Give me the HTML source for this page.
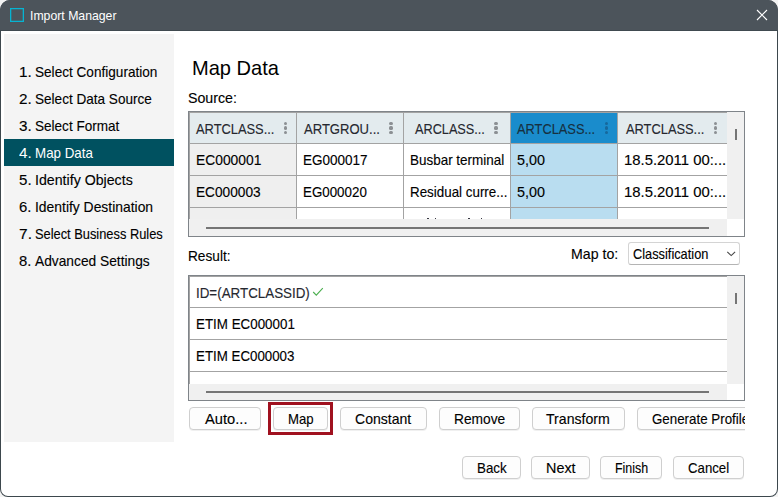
<!DOCTYPE html>
<html>
<head>
<meta charset="utf-8">
<title>Import Manager</title>
<style>
*{box-sizing:border-box;margin:0;padding:0}
html,body{width:778px;height:497px;overflow:hidden;background:#f3f3f3}
body{font-family:"Liberation Sans",sans-serif;font-size:14px;color:#111;position:relative}
.win{position:absolute;left:0;top:0;width:778px;height:497px;border-radius:10px 10px 8px 8px;background:#fff;overflow:hidden;box-shadow:inset 0 0 0 1px #3d474d}
.a{position:absolute}
.tb{position:absolute;left:0;top:0;width:778px;height:31px;background:#4c545b;border-bottom:1px solid #404a50}
.ico{position:absolute;left:10px;top:8px;width:14px;height:14px;border:1px solid #06b4d2;box-shadow:inset 0 0 0 0.3px #06b4d2}
.side{position:absolute;left:4px;top:34px;width:170px;height:408px;background:#f4f4f4}
.sel{position:absolute;left:4px;top:139px;width:170px;height:27px;background:#005160}
.t{position:absolute;white-space:nowrap;height:20px;line-height:20px;transform-origin:0 50%;-webkit-text-stroke:0.12px}
.grid{position:absolute;background:#fff;border:1px solid #7f8489;overflow:hidden}
.btn{position:absolute;height:23px;border:1px solid #cfcfcf;border-radius:4px;background:#fdfdfd;text-align:center;line-height:21px;font-size:14.5px;white-space:nowrap;color:#111;box-shadow:0 1px 0 rgba(0,0,0,0.06)}
</style>
</head>
<body>
<div class="win">
<div class="tb"><div class="ico"></div>
<svg class="a" style="left:756px;top:9px" width="12" height="12" viewBox="0 0 12 12"><path d="M1 1 L11 11 M11 1 L1 11" stroke="#fff" stroke-width="1.1" fill="none"/></svg></div>
<div class="t" style="left:29.8px;top:6.00px;font-size:12.4px;transform:scaleX(0.9892);color:#ffffff;-webkit-text-stroke:0">Import Manager</div>
<div class="side"></div><div class="sel"></div>
<div class="t" style="left:18.8px;top:62.00px;font-size:14.2px;transform:scaleX(1.0812);color:#000000">1.</div>
<div class="t" style="left:18.8px;top:89.00px;font-size:14.2px;transform:scaleX(1.0795);color:#000000">2.</div>
<div class="t" style="left:18.9px;top:116.00px;font-size:14.2px;transform:scaleX(1.0754);color:#000000">3.</div>
<div class="t" style="left:18.9px;top:143.00px;font-size:14.2px;transform:scaleX(1.0754);color:#ffffff;-webkit-text-stroke:0">4.</div>
<div class="t" style="left:19.0px;top:170.00px;font-size:14.2px;transform:scaleX(1.0640);color:#000000">5.</div>
<div class="t" style="left:19.1px;top:197.00px;font-size:14.2px;transform:scaleX(1.0511);color:#000000">6.</div>
<div class="t" style="left:18.7px;top:224.00px;font-size:14.2px;transform:scaleX(1.0952);color:#000000">7.</div>
<div class="t" style="left:19.2px;top:251.00px;font-size:14.2px;transform:scaleX(1.0442);color:#000000">8.</div>
<div class="t" style="left:34.7px;top:62.00px;font-size:14.2px;transform:scaleX(0.9578);color:#000000">Select Configuration</div>
<div class="t" style="left:34.7px;top:89.00px;font-size:14.2px;transform:scaleX(0.9559);color:#000000">Select Data Source</div>
<div class="t" style="left:34.7px;top:116.00px;font-size:14.2px;transform:scaleX(0.9547);color:#000000">Select Format</div>
<div class="t" style="left:35.4px;top:143.00px;font-size:14.2px;transform:scaleX(0.9415);color:#ffffff;-webkit-text-stroke:0">Map Data</div>
<div class="t" style="left:34.7px;top:170.00px;font-size:14.2px;transform:scaleX(0.9995);color:#000000">Identify Objects</div>
<div class="t" style="left:34.7px;top:197.00px;font-size:14.2px;transform:scaleX(0.9785);color:#000000">Identify Destination</div>
<div class="t" style="left:34.7px;top:224.00px;font-size:14.2px;transform:scaleX(0.9049);color:#000000">Select Business Rules</div>
<div class="t" style="left:34.6px;top:251.00px;font-size:14.2px;transform:scaleX(0.9696);color:#000000">Advanced Settings</div>
<div class="t" style="left:192.0px;top:58.00px;font-size:20.2px;transform:scaleX(0.9936);color:#000000;-webkit-text-stroke:0">Map Data</div>
<div class="t" style="left:187.5px;top:88.00px;font-size:14.2px;transform:scaleX(1.0009);color:#000000">Source:</div>
<div class="t" style="left:188.1px;top:246.00px;font-size:14.2px;transform:scaleX(0.9628);color:#000000">Result:</div>
<div class="t" style="left:570.9px;top:244.00px;font-size:14.2px;transform:scaleX(0.9982);color:#000000">Map to:</div>
<div class="grid" style="left:188px;top:111px;width:557px;height:126px">
<div class="a" style="left:0px;top:0px;width:538px;height:31px;background:#e3ebee;"></div>
<div class="a" style="left:0px;top:31px;width:107px;height:76px;background:#efefef;"></div>
<div class="a" style="left:321px;top:0px;width:107px;height:31px;background:#1a8ccc;"></div>
<div class="a" style="left:321px;top:31px;width:107px;height:76px;background:#b9ddf0;"></div>
<div class="a" style="left:0px;top:0px;width:538px;height:1px;background:#a3a3a3;"></div>
<div class="a" style="left:0px;top:31px;width:538px;height:1px;background:#a3a3a3;"></div>
<div class="a" style="left:0px;top:63px;width:538px;height:1px;background:#a3a3a3;"></div>
<div class="a" style="left:0px;top:95px;width:538px;height:1px;background:#a3a3a3;"></div>
<div class="a" style="left:0px;top:0px;width:1px;height:107px;background:#a3a3a3;"></div>
<div class="a" style="left:107px;top:0px;width:1px;height:107px;background:#a3a3a3;"></div>
<div class="a" style="left:214px;top:0px;width:1px;height:107px;background:#a3a3a3;"></div>
<div class="a" style="left:321px;top:0px;width:1px;height:107px;background:#a3a3a3;"></div>
<div class="a" style="left:428px;top:0px;width:1px;height:107px;background:#a3a3a3;"></div>
<div class="a" style="left:538px;top:0px;width:17px;height:107px;background:#f0f0f0;"></div>
<div class="a" style="left:546px;top:17px;width:2px;height:11px;background:#757575;"></div>
<div class="a" style="left:0px;top:107px;width:538px;height:17px;background:#f0f0f0;"></div>
<div class="a" style="left:17px;top:115px;width:503px;height:2px;background:#757575;"></div>
<div class="a" style="left:95.3px;top:9.6px;width:3.2px;height:3.2px;border-radius:50%;background:#8b8f93"></div>
<div class="a" style="left:95.3px;top:14.4px;width:3.2px;height:3.2px;border-radius:50%;background:#8b8f93"></div>
<div class="a" style="left:95.3px;top:19.2px;width:3.2px;height:3.2px;border-radius:50%;background:#8b8f93"></div>
<div class="a" style="left:200.4px;top:9.6px;width:3.2px;height:3.2px;border-radius:50%;background:#8b8f93"></div>
<div class="a" style="left:200.4px;top:14.4px;width:3.2px;height:3.2px;border-radius:50%;background:#8b8f93"></div>
<div class="a" style="left:200.4px;top:19.2px;width:3.2px;height:3.2px;border-radius:50%;background:#8b8f93"></div>
<div class="a" style="left:305.4px;top:9.6px;width:3.2px;height:3.2px;border-radius:50%;background:#8b8f93"></div>
<div class="a" style="left:305.4px;top:14.4px;width:3.2px;height:3.2px;border-radius:50%;background:#8b8f93"></div>
<div class="a" style="left:305.4px;top:19.2px;width:3.2px;height:3.2px;border-radius:50%;background:#8b8f93"></div>
<div class="a" style="left:416.2px;top:9.6px;width:3.2px;height:3.2px;border-radius:50%;background:#17689c"></div>
<div class="a" style="left:416.2px;top:14.4px;width:3.2px;height:3.2px;border-radius:50%;background:#17689c"></div>
<div class="a" style="left:416.2px;top:19.2px;width:3.2px;height:3.2px;border-radius:50%;background:#17689c"></div>
<div class="a" style="left:524.7px;top:9.6px;width:3.2px;height:3.2px;border-radius:50%;background:#8b8f93"></div>
<div class="a" style="left:524.7px;top:14.4px;width:3.2px;height:3.2px;border-radius:50%;background:#8b8f93"></div>
<div class="a" style="left:524.7px;top:19.2px;width:3.2px;height:3.2px;border-radius:50%;background:#8b8f93"></div>
<div class="a" style="left:238.4px;top:106px;width:1.6px;height:1px;background:#3a3a44"></div>
<div class="a" style="left:245.8px;top:106px;width:1.6px;height:1px;background:#3a3a44"></div>
<div class="a" style="left:279.0px;top:106px;width:1.6px;height:1px;background:#3a3a44"></div>
<div class="a" style="left:291.8px;top:106px;width:1.6px;height:1px;background:#3a3a44"></div>
</div>
<div class="t" style="left:196.1px;top:120.00px;font-size:13.8px;transform:scaleX(0.9327);color:#25272f">ARTCLASS...</div>
<div class="t" style="left:303.8px;top:120.00px;font-size:13.8px;transform:scaleX(0.9459);color:#25272f">ARTGROU...</div>
<div class="t" style="left:414.8px;top:120.00px;font-size:13.8px;transform:scaleX(0.9206);color:#25272f">ARCLASS...</div>
<div class="t" style="left:517.4px;top:120.00px;font-size:13.8px;transform:scaleX(0.9290);color:#17303f">ARTCLASS...</div>
<div class="t" style="left:625.5px;top:120.00px;font-size:13.8px;transform:scaleX(0.9315);color:#25272f">ARTCLASS...</div>
<div class="t" style="left:195.7px;top:150.00px;font-size:14.2px;transform:scaleX(0.9744);color:#000000">EC000001</div>
<div class="t" style="left:302.8px;top:150.00px;font-size:14.2px;transform:scaleX(0.9517);color:#000000">EG000017</div>
<div class="t" style="left:410.1px;top:150.00px;font-size:14.2px;transform:scaleX(0.9480);color:#000000">Busbar terminal</div>
<div class="t" style="left:517.0px;top:150.00px;font-size:14.2px;transform:scaleX(1.0114);color:#000000">5,00</div>
<div class="t" style="left:623.6px;top:150.00px;font-size:14.2px;transform:scaleX(1.0473);color:#000000">18.5.2011 00:...</div>
<div class="t" style="left:195.7px;top:182.00px;font-size:14.2px;transform:scaleX(0.9636);color:#000000">EC000003</div>
<div class="t" style="left:302.9px;top:182.00px;font-size:14.2px;transform:scaleX(0.9405);color:#000000">EG000020</div>
<div class="t" style="left:410.2px;top:182.00px;font-size:14.2px;transform:scaleX(0.9428);color:#000000">Residual curre...</div>
<div class="t" style="left:517.0px;top:182.00px;font-size:14.2px;transform:scaleX(1.0114);color:#000000">5,00</div>
<div class="t" style="left:623.6px;top:182.00px;font-size:14.2px;transform:scaleX(1.0473);color:#000000">18.5.2011 00:...</div>
<div class="a" style="left:628px;top:242px;width:112px;height:23px;border:1px solid #d4d4d4;border-bottom-color:#b4b4b4;border-radius:3px;background:#fff"></div>
<svg class="a" style="left:726px;top:250px" width="11" height="8" viewBox="0 0 11 8"><path d="M1.3 1.8 L5.2 5.6 L9.1 1.8" stroke="#484848" stroke-width="1.1" fill="none"/></svg>
<div class="t" style="left:632.8px;top:244.00px;font-size:14.2px;transform:scaleX(0.9016);color:#000000">Classification</div>
<div class="grid" style="left:188px;top:275px;width:557px;height:126px">
<div class="a" style="left:0px;top:0px;width:538px;height:1px;background:#a3a3a3"></div>
<div class="a" style="left:0px;top:0px;width:1px;height:108px;background:#a3a3a3"></div>
<div class="a" style="left:0px;top:31px;width:538px;height:1px;background:#a3a3a3"></div>
<div class="a" style="left:0px;top:63px;width:538px;height:1px;background:#a3a3a3"></div>
<div class="a" style="left:0px;top:95px;width:538px;height:1px;background:#a3a3a3"></div>
<div class="a" style="left:538px;top:0px;width:17px;height:108px;background:#f0f0f0"></div>
<div class="a" style="left:546px;top:17px;width:2px;height:11px;background:#757575"></div>
<div class="a" style="left:0px;top:108px;width:538px;height:16px;background:#f0f0f0"></div>
<div class="a" style="left:17px;top:115px;width:503px;height:2px;background:#757575"></div>
</div>
<div class="t" style="left:195.5px;top:284.00px;font-size:13.8px;transform:scaleX(0.9692);color:#25272f">ID=(ARTCLASSID)</div>
<div class="t" style="left:196.0px;top:314.00px;font-size:14.2px;transform:scaleX(0.9423);color:#000000">ETIM EC000001</div>
<div class="t" style="left:196.0px;top:346.00px;font-size:14.2px;transform:scaleX(0.9384);color:#000000">ETIM EC000003</div>
<svg class="a" style="left:312px;top:287px" width="13" height="10" viewBox="0 0 13 10"><path d="M1.2 5 L4.3 8.1 L10.8 1.2" stroke="#4caf50" stroke-width="1.1" fill="none"/></svg>
<div class="a" style="left:188px;top:400px;width:557px;height:40px;overflow:hidden">
<div class="btn" style="left:1px;top:7px;width:72px"></div><div class="t" style="left:16.7px;top:9.00px;font-size:14.2px;transform:scaleX(1.0353);color:#000000">Auto...</div>
<div class="a" style="left:80px;top:2px;width:65px;height:33px;border:3px solid #a0111f"></div>
<div class="btn" style="left:85px;top:7px;width:55px"></div><div class="t" style="left:99.8px;top:9.00px;font-size:14.2px;transform:scaleX(0.9278);color:#000000">Map</div>
<div class="btn" style="left:152px;top:7px;width:87px"></div><div class="t" style="left:167.0px;top:9.00px;font-size:14.2px;transform:scaleX(0.9899);color:#000000">Constant</div>
<div class="btn" style="left:251px;top:7px;width:81px"></div><div class="t" style="left:266.2px;top:9.00px;font-size:14.2px;transform:scaleX(0.9699);color:#000000">Remove</div>
<div class="btn" style="left:344px;top:7px;width:93px"></div><div class="t" style="left:358.1px;top:9.00px;font-size:14.2px;transform:scaleX(0.9955);color:#000000">Transform</div>
<div class="btn" style="left:449px;top:7px;width:130px"></div><div class="t" style="left:463.9px;top:9.00px;font-size:14.2px;transform:scaleX(0.9398);color:#000000">Generate Profile</div>
</div>
<div class="btn" style="left:462px;top:456px;width:59px"></div><div class="t" style="left:476.6px;top:458.00px;font-size:14.2px;transform:scaleX(0.9406);color:#000000">Back</div>
<div class="btn" style="left:531px;top:456px;width:59px"></div><div class="t" style="left:545.9px;top:458.00px;font-size:14.2px;transform:scaleX(1.0137);color:#000000">Next</div>
<div class="btn" style="left:600px;top:456px;width:62px"></div><div class="t" style="left:614.6px;top:458.00px;font-size:14.2px;transform:scaleX(0.8751);color:#000000">Finish</div>
<div class="btn" style="left:673px;top:456px;width:71px"></div><div class="t" style="left:687.7px;top:458.00px;font-size:14.2px;transform:scaleX(0.9317);color:#000000">Cancel</div>
</div>
</body>
</html>
